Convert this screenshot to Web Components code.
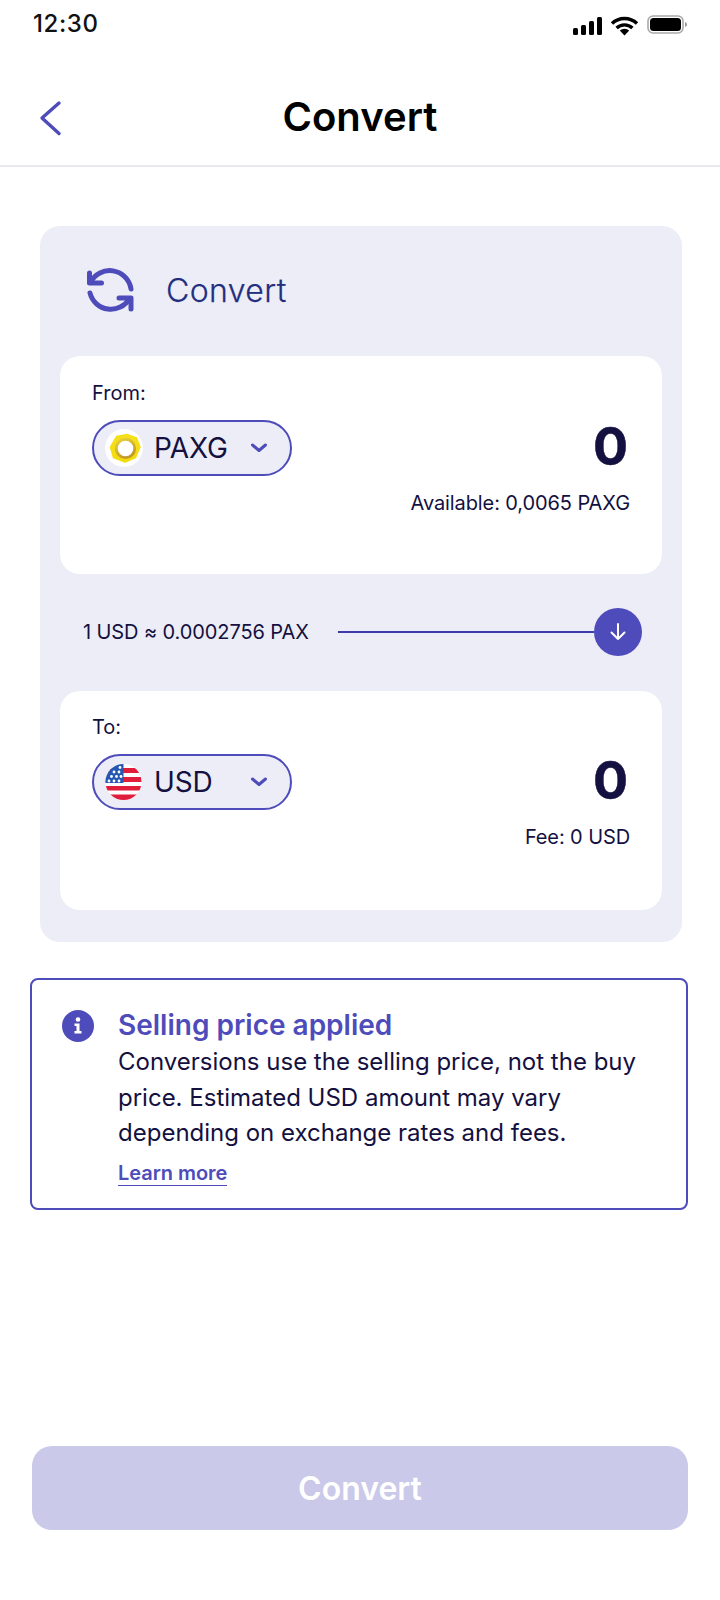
<!DOCTYPE html>
<html lang="en"><head><meta charset="utf-8"><title>Convert</title>
<style>
html,body{margin:0;padding:0;background:#fff}
body{font-family:Inter,"Liberation Sans",sans-serif;color:#14103f;width:720px;height:1600px;overflow:hidden}
</style></head><body>
<convert-screen>
  <status-bar slot="top"></status-bar>
  <app-header slot="top" title="Convert"></app-header>
  <convert-card>
    <currency-box label="From:" code="PAXG" icon="paxg" amount="0" note="Available: 0,0065 PAXG"></currency-box>
    <rate-row text="1 USD ≈ 0.0002756 PAX"></rate-row>
    <currency-box class="to" label="To:" code="USD" icon="usd" amount="0" note="Fee: 0 USD"></currency-box>
  </convert-card>
  <info-alert heading="Selling price applied" link="Learn more">Conversions use the selling price, not the buy price. Estimated USD amount may vary depending on exchange rates and fees.</info-alert>
  <primary-button slot="bottom">Convert</primary-button>
</convert-screen>
<script>
function reg(name, html){
  customElements.define(name, class extends HTMLElement{
    constructor(){super();this.attachShadow({mode:'open'});}
    connectedCallback(){
      const a=n=>this.getAttribute(n)||'';
      this.shadowRoot.innerHTML=html(a);
    }
  });
}
reg('convert-screen',()=>`<style>
:host{display:flex;flex-direction:column;width:720px;height:1600px;box-sizing:border-box}
.body{display:flex;flex-direction:column;flex:1}
.bottom{margin-top:auto;padding:0 32px 70px}
</style><slot name="top"></slot><div class="body"><slot></slot><div class="bottom"><slot name="bottom"></slot></div></div>`);

reg('status-bar',()=>`<style>
:host{display:flex;height:60px;justify-content:space-between;box-sizing:border-box;padding:0 33px 0 33px}
.t{font:500 24px/48px Inter,sans-serif;color:#111;letter-spacing:.6px}
svg{display:block;margin-top:15px}
</style><div class="t">12:30</div>
<svg width="115" height="22" viewBox="573 15 115 22">
<g fill="#000"><rect x="574" y="28" width="5" height="7" rx="1.5"/><rect x="582" y="25" width="5" height="10" rx="1.5"/><rect x="590" y="21" width="5" height="14" rx="1.5"/><rect x="598" y="17" width="5" height="18" rx="1.5"/></g>
<g fill="none" stroke="#000" stroke-width="3.4"><path d="M613 23.5a18 18 0 0 1 25 0"/><path d="M617.6 28a11.5 11.5 0 0 1 15.8 0"/></g><path d="M620.8 30.6a6.6 6.6 0 0 1 9.4 0L625.5 35.5z" fill="#000"/>
<rect x="649" y="16" width="35" height="17" rx="5" fill="none" stroke="#a9a9a9" stroke-width="1.6"/><rect x="651" y="18" width="31" height="13" rx="3.5" fill="#000"/><path d="M686 22v5c1.3-.4 2-1.4 2-2.5s-.7-2.1-2-2.5z" fill="#9a9a9a"/>
</svg>`);

reg('app-header',a=>`<style>
:host{display:flex;align-items:center;justify-content:center;position:relative;height:107px;box-sizing:border-box;border-bottom:2px solid #e8e8ee;padding-top:8px}
h1{margin:0;font:600 40px/48px Inter,sans-serif;color:#000;letter-spacing:.05px}
svg{position:absolute;left:38px;top:40px}
</style><svg width="26" height="36" viewBox="38 100 26 36"><path d="M59 103 42 118 59 133.500" fill="none" stroke="#4e4cba" stroke-width="3.400" stroke-linecap="round" stroke-linejoin="round"/></svg><h1>${a('title')}</h1>`);

reg('convert-card',()=>`<style>
:host{display:block;margin:59px 38px 0 40px;background:#ecedf6;border-radius:20px;padding:0 20px 32.5px}
.h{display:flex;align-items:center;height:130px;gap:31px;padding-left:25px;box-sizing:border-box}
.h span{font:300 32px/40px Inter,sans-serif;color:#232e7e;margin-top:-1px;letter-spacing:.4px;-webkit-text-stroke:.25px #232e7e}
svg{display:block;margin-top:-1px}
</style><div class="h"><svg width="50" height="50" viewBox="85 265 50 50"><g fill="none" stroke="#4e4cba" stroke-width="5" stroke-linecap="round" stroke-linejoin="round"><path d="M89.500 272v10h12"/><path d="M90.500 281.500A21.500 21.500 0 0 1 131 288"/><path d="M90 292A21.500 21.500 0 0 0 129.500 297.500"/><path d="M119 297h12v11"/></g></svg><span>Convert</span></div><slot></slot>`);

reg('currency-box',a=>`<style>
:host{display:block;height:218px;box-sizing:border-box;background:#fff;border-radius:20px;padding:25px 32px 0 32px}
:host(.to){height:218.5px;padding-top:24px}
.l{font:400 20px/24px Inter,sans-serif;color:#14103f}
.r{display:flex;justify-content:space-between;align-items:center;margin-top:15px}
.a{font:700 52px/52px Inter,sans-serif;color:#14103f;margin:-2px 2px 0 0;-webkit-text-stroke:.5px #14103f}
.n{font:400 20px/24px Inter,sans-serif;color:#14103f;text-align:right;margin-top:15px;letter-spacing:-.1px}
</style><div class="l">${a('label')}</div><div class="r"><currency-pill code="${a('code')}" icon="${a('icon')}"></currency-pill><div class="a">${a('amount')}</div></div><div class="n">${a('note')}</div>`);

const icons={
paxg:`<svg width="38" height="38" viewBox="0 0 38 38"><defs><linearGradient id="g" x1="0" y1="0" x2="0" y2="1"><stop offset="0" stop-color="#f5e01a"/><stop offset="1" stop-color="#f2dc0c"/></linearGradient><linearGradient id="r" x1="0" y1="0" x2="0.5" y2="1"><stop offset="0" stop-color="#e9d23c"/><stop offset="1" stop-color="#c29a25"/></linearGradient></defs><circle cx="19" cy="19" r="19" fill="#fff"/><path d="M11.500 7.500 22 5.500 31.500 9 35 18 30.500 28.500 20 33 8.500 28.500 5.500 18Z" fill="url(#g)" stroke="url(#g)" stroke-width="1.500" stroke-linejoin="round"/><circle cx="20.500" cy="19.500" r="9.200" fill="#fff" stroke="url(#r)" stroke-width="2.800"/></svg>`,
usd:`<svg width="38" height="38" viewBox="0 0 38 38"><defs><clipPath id="c"><circle cx="18.500" cy="19" r="18"/></clipPath></defs><g clip-path="url(#c)"><rect width="38" height="38" fill="#fff"/><g fill="#e01e3c"><rect y="5" width="38" height="5"/><rect y="14" width="38" height="5"/><rect y="23" width="38" height="4.500"/><rect y="31.500" width="38" height="6.500"/></g><rect width="18.500" height="20" fill="#2458b3"/><g fill="#fff"><circle cx="4" cy="18" r="1.400"/><circle cx="9" cy="18" r="1.400"/><circle cx="14" cy="18" r="1.400"/><circle cx="6.500" cy="13.500" r="1.400"/><circle cx="11.500" cy="13.500" r="1.400"/><circle cx="16" cy="13.500" r="1.400"/><circle cx="9" cy="9" r="1.400"/><circle cx="14" cy="9" r="1.400"/><circle cx="15" cy="4.500" r="1.400"/></g></g></svg>`};
reg('currency-pill',a=>`<style>
:host{display:flex;align-items:center;width:200px;height:56px;box-sizing:border-box;border:2px solid #4e4cba;border-radius:28px;background:#ecedf6;padding:0 0 0 11px}
svg{display:block;flex:none}
.c{font:400 28px/34px Inter,sans-serif;color:#14103f;margin-left:11px;flex:1;letter-spacing:-.1px}
.v{margin-right:22px}
</style>${icons[a('icon')]}<div class="c">${a('code')}</div><svg class="v" width="18" height="12" viewBox="0 0 18 12"><path d="M2.500 3 9 8.500 15.500 3" fill="none" stroke="#4e4cba" stroke-width="3" stroke-linecap="round" stroke-linejoin="round"/></svg>`);

reg('rate-row',a=>`<style>
:host{display:flex;align-items:center;height:117px;box-sizing:border-box;padding:0 20px 2px 23px}
.t{font:400 20px/24px Inter,sans-serif;color:#14103f;white-space:nowrap;letter-spacing:-.1px}
.l{flex:1;height:2px;background:#3d3bab;margin-left:29px}
.b{flex:none;width:48px;height:48px;border-radius:50%;background:#4e4cba;display:flex;align-items:center;justify-content:center}
svg{display:block}
</style><div class="t">${a('text')}</div><div class="l"></div><div class="b"><svg width="20" height="20" viewBox="0 0 20 20"><path d="M10 2v15M3.500 10.500 10 17l6.500-6.500" fill="none" stroke="#fff" stroke-width="2" stroke-linecap="round" stroke-linejoin="round"/></svg></div>`);

reg('info-alert',a=>`<style>
:host{display:flex;margin:36px 32px 0 30px;height:232px;box-sizing:border-box;border:2px solid #4e4cba;border-radius:8px;padding:27px 20px 0 30px;gap:24px;background:#fff}
svg{display:block;flex:none;margin-top:3px}
.w{flex:1;min-width:0}
.h{font:600 28px/37px Inter,sans-serif;color:#4e4cba}
.p{font:400 24px/35.7px Inter,sans-serif;color:#14103f}
a{display:inline-block;font:600 20px/24px Inter,sans-serif;color:#4e4cba;text-decoration:none;border-bottom:1.500px solid #4e4cba;margin-top:10px;letter-spacing:-.05px}
</style><svg width="32" height="32" viewBox="0 0 32 32"><circle cx="16" cy="16" r="16" fill="#4e4cba"/><g fill="#fff"><circle cx="16" cy="9.500" r="2.300"/><path d="M12.500 13.500H17.500V21H19.500V23.500H12.500V21H14.500V16H12.500Z"/></g></svg><div class="w"><div class="h">${a('heading')}</div><div class="p"><slot></slot></div><a>${a('link')}</a></div>`);

reg('primary-button',()=>`<style>
:host{display:flex;align-items:center;justify-content:center;height:84px;box-sizing:border-box;padding-top:2px;border-radius:20px;background:#cac9e9;color:#fff;font:600 32px/40px Inter,sans-serif}
</style><slot></slot>`);
</script>
</body></html>
